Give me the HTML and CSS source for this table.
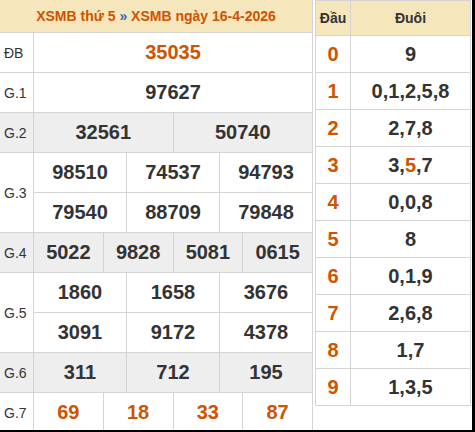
FILE: index.html
```html
<!DOCTYPE html>
<html lang="vi">

<head>
    <meta charset="UTF-8">
    <meta name="viewport" content="width=device-width, initial-scale=1.0">
    <title>XSMB 16-4-2026</title>
    <link rel="stylesheet" href="styles.css">
</head>

<body>
    <div class="page">
        <table class="kq">
            <colgroup>
                <col class="c-label">
                <col><col><col><col><col><col><col><col><col><col><col><col>
            </colgroup>
            <thead>
                <tr>
                    <th colspan="13">XSMB thứ 5 <span class="sep">»</span> XSMB ngày 16-4-2026</th>
                </tr>
            </thead>
            <tbody>
                <tr>
                    <td class="label">ĐB</td>
                    <td colspan="12" class="num hot">35035</td>
                </tr>
                <tr>
                    <td class="label">G.1</td>
                    <td colspan="12" class="num">97627</td>
                </tr>
                <tr class="alt">
                    <td class="label">G.2</td>
                    <td colspan="6" class="num">32561</td>
                    <td colspan="6" class="num">50740</td>
                </tr>
                <tr>
                    <td class="label" rowspan="2">G.3</td>
                    <td colspan="4" class="num">98510</td>
                    <td colspan="4" class="num">74537</td>
                    <td colspan="4" class="num">94793</td>
                </tr>
                <tr>
                    <td colspan="4" class="num">79540</td>
                    <td colspan="4" class="num">88709</td>
                    <td colspan="4" class="num">79848</td>
                </tr>
                <tr class="alt">
                    <td class="label">G.4</td>
                    <td colspan="3" class="num">5022</td>
                    <td colspan="3" class="num">9828</td>
                    <td colspan="3" class="num">5081</td>
                    <td colspan="3" class="num">0615</td>
                </tr>
                <tr>
                    <td class="label" rowspan="2">G.5</td>
                    <td colspan="4" class="num">1860</td>
                    <td colspan="4" class="num">1658</td>
                    <td colspan="4" class="num">3676</td>
                </tr>
                <tr>
                    <td colspan="4" class="num">3091</td>
                    <td colspan="4" class="num">9172</td>
                    <td colspan="4" class="num">4378</td>
                </tr>
                <tr class="alt">
                    <td class="label">G.6</td>
                    <td colspan="4" class="num">311</td>
                    <td colspan="4" class="num">712</td>
                    <td colspan="4" class="num">195</td>
                </tr>
                <tr>
                    <td class="label">G.7</td>
                    <td colspan="3" class="num hot">69</td>
                    <td colspan="3" class="num hot">18</td>
                    <td colspan="3" class="num hot">33</td>
                    <td colspan="3" class="num hot">87</td>
                </tr>
            </tbody>
        </table>

        <table class="loto">
            <colgroup>
                <col class="c-dau">
                <col>
            </colgroup>
            <thead>
                <tr>
                    <th>Đầu</th>
                    <th>Đuôi</th>
                </tr>
            </thead>
            <tbody>
                <tr><td class="hot">0</td><td>9</td></tr>
                <tr><td class="hot">1</td><td>0,1,2,5,8</td></tr>
                <tr><td class="hot">2</td><td>2,7,8</td></tr>
                <tr><td class="hot">3</td><td>3,<span class="hot">5</span>,7</td></tr>
                <tr><td class="hot">4</td><td>0,0,8</td></tr>
                <tr><td class="hot">5</td><td>8</td></tr>
                <tr><td class="hot">6</td><td>0,1,9</td></tr>
                <tr><td class="hot">7</td><td>2,6,8</td></tr>
                <tr><td class="hot">8</td><td>1,7</td></tr>
                <tr><td class="hot">9</td><td>1,3,5</td></tr>
            </tbody>
        </table>
    </div>
</body>

</html>
```

FILE: styles.css
```css
html,
body {
    margin: 0;
    background-color: #000;
}

.page {
    display: flex;
    align-items: flex-start;
    gap: 2px;
    width: 472px;
    height: 430px;
    overflow: hidden;
    background-color: #fff;
    font-family: "Liberation Sans", Arial, sans-serif;
    color: #333;
}

table {
    border-collapse: collapse;
    table-layout: fixed;
}

th,
td {
    border: 1px solid #d4d4d4;
    padding: 0;
    text-align: center;
}

th {
    background-color: #f6e6bc;
    font-weight: bold;
}

.hot {
    color: #cf5300;
}

/* bảng kết quả */
.kq {
    width: 314px;
    margin: -1px 0 0 -1px;
}

.kq .c-label {
    width: 34px;
}

.kq th {
    height: 32px;
    font-size: 14px;
    color: #cf5300;
}

.kq .sep {
    color: #2f6cc0;
}

.kq td {
    height: 39px;
}

.kq .label {
    font-size: 14px;
    text-align: left;
    padding-left: 4px;
}

.kq .num {
    font-size: 20px;
    font-weight: bold;
}

.kq .alt td {
    background-color: #eee;
}

/* bảng loto */
.loto {
    width: 156px;
}

.loto .c-dau {
    width: 35px;
}

.loto th {
    height: 34px;
    font-size: 14px;
}

.loto td {
    height: 36px;
    font-size: 20px;
    font-weight: bold;
}
```
